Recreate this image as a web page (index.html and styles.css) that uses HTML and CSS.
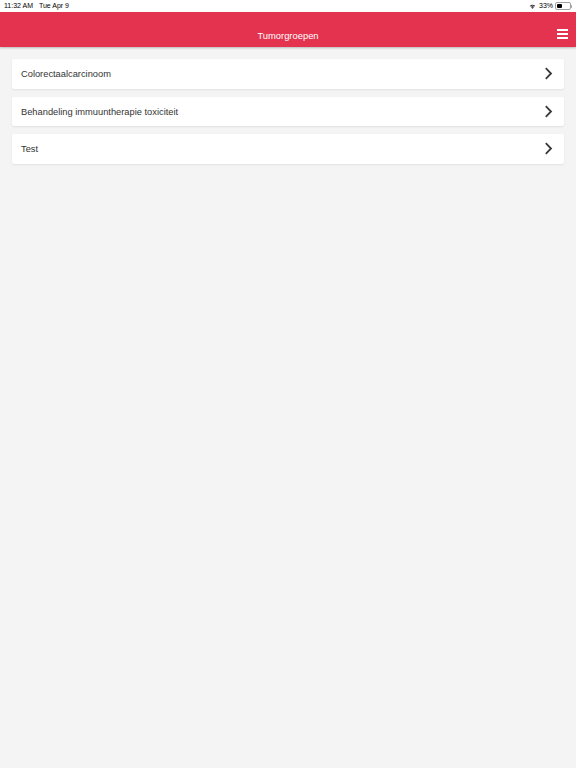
FILE: index.html
```html
<!DOCTYPE html>
<html>
<head>
<meta charset="utf-8">
<link rel="stylesheet" href="styles.css">
</head>
<body>
<div class="statusbar">
  <div class="sb-left">11:32 AM&nbsp;&nbsp;&nbsp;Tue Apr 9</div>
  <div class="sb-right">
    <svg class="wifi" width="7" height="5" viewBox="0 0 16 12">
      <path d="M8 11.5 L5.6 8.9 A3.4 3.4 0 0 1 10.4 8.9 Z" fill="#000"/>
      <path d="M3.9 7.1 A5.9 5.9 0 0 1 12.1 7.1 L10.9 8.3 A4.2 4.2 0 0 0 5.1 8.3 Z" fill="#000"/>
      <path d="M1.6 4.8 A9.2 9.2 0 0 1 14.4 4.8 L13.2 6 A7.5 7.5 0 0 0 2.8 6 Z" fill="#000"/>
    </svg>
    <span class="pct">33%</span>
    <span class="battery"><span class="fill"></span></span><span class="nub"></span>
  </div>
</div>
<header class="topbar">
  <div class="title">Tumorgroepen</div>
  <div class="menu">
    <span></span><span></span><span></span>
  </div>
</header>
<main class="list">
  <div class="card"><span class="label">Colorectaalcarcinoom</span>
    <svg class="chev" width="9" height="13" viewBox="0 0 9 13"><path d="M1.8 1.2 L7 6.5 L1.8 11.8" fill="none" stroke="#3a3a3a" stroke-width="1.8"/></svg></div>
  <div class="card"><span class="label">Behandeling immuuntherapie toxiciteit</span>
    <svg class="chev" width="9" height="13" viewBox="0 0 9 13"><path d="M1.8 1.2 L7 6.5 L1.8 11.8" fill="none" stroke="#3a3a3a" stroke-width="1.8"/></svg></div>
  <div class="card"><span class="label">Test</span>
    <svg class="chev" width="9" height="13" viewBox="0 0 9 13"><path d="M1.8 1.2 L7 6.5 L1.8 11.8" fill="none" stroke="#3a3a3a" stroke-width="1.8"/></svg></div>
</main>
</body>
</html>
```
FILE: styles.css
```css
html, body {
  margin: 0;
  padding: 0;
}
body {
  width: 576px;
  height: 768px;
  background: #f4f4f4;
  font-family: "Liberation Sans", Arial, sans-serif;
  overflow: hidden;
}
.statusbar {
  height: 12px;
  background: #ffffff;
  display: flex;
  align-items: center;
  justify-content: space-between;
  padding: 0 4px;
  font-size: 7px;
  color: #000;
}
.sb-left {
  line-height: 12px;
}
.sb-right {
  display: flex;
  align-items: center;
  gap: 1.5px;
}
.wifi {
  display: block;
  margin-right: 1px;
}
.pct {
  line-height: 12px;
}
.battery {
  display: block;
  width: 12px;
  height: 4px;
  border: 1px solid #a0a0a0;
  border-radius: 2px;
  padding: 1px;
  box-sizing: content-box;
  margin-left: 0.5px;
}
.battery .fill {
  display: block;
  width: 5px;
  height: 4px;
  background: #000;
  border-radius: 1px;
}
.nub {
  display: block;
  width: 1px;
  height: 3px;
  background: #a0a0a0;
  margin-left: -1.5px;
  border-radius: 0 1px 1px 0;
}
.topbar {
  height: 35px;
  background: #e4334f;
  display: flex;
  align-items: center;
  justify-content: center;
  position: relative;
  box-shadow: 0 1px 2px rgba(0,0,0,0.25);
}
.title {
  color: #ffffff;
  font-size: 9.4px;
  font-weight: 500;
  padding-top: 12px;
}
.menu {
  position: absolute;
  right: 8px;
  top: 17px;
  width: 11px;
  display: flex;
  flex-direction: column;
  gap: 2.5px;
}
.menu span {
  display: block;
  height: 1.5px;
  background: #ffffff;
}
.list {
  padding: 12px 12px;
  display: flex;
  flex-direction: column;
  gap: 8px;
}
.card {
  height: 29.5px;
  background: #ffffff;
  border-radius: 2px;
  box-shadow: 0 1px 2px rgba(0,0,0,0.08);
  display: flex;
  align-items: center;
  justify-content: space-between;
  padding: 0 11px 0 9px;
}
.label {
  font-size: 9.3px;
  color: #333333;
  padding-top: 1px;
}
.chev {
  display: block;
}
```
